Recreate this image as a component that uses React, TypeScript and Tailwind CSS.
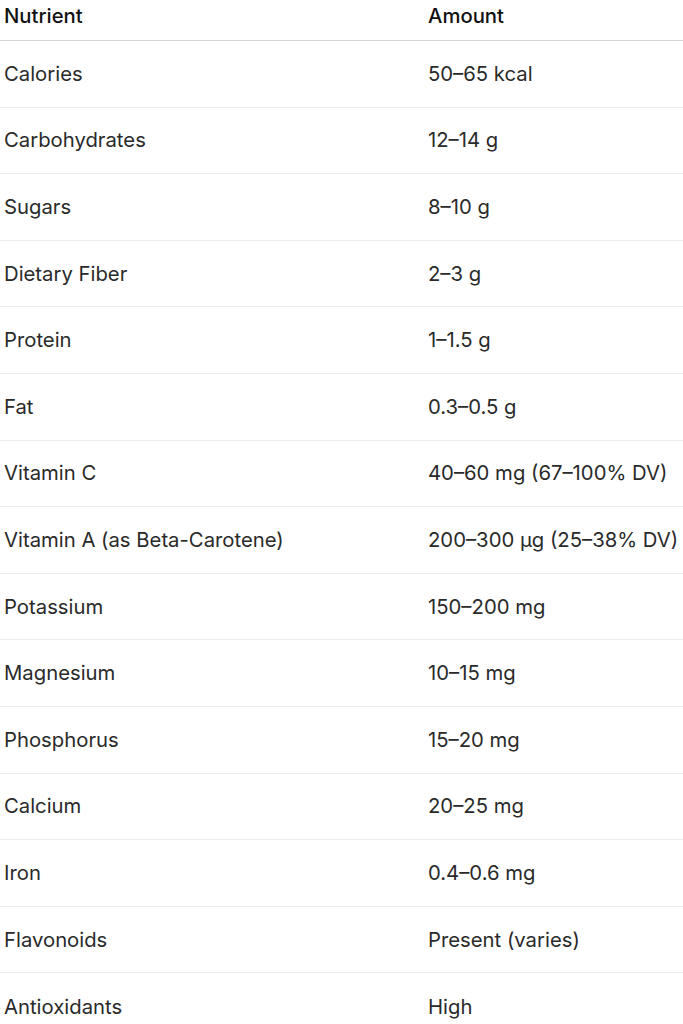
import React from 'react';

interface Row {
  nutrient: string;
  amount: string;
}

const rows: Row[] = [
  { nutrient: 'Calories', amount: '50–65 kcal' },
  { nutrient: 'Carbohydrates', amount: '12–14 g' },
  { nutrient: 'Sugars', amount: '8–10 g' },
  { nutrient: 'Dietary Fiber', amount: '2–3 g' },
  { nutrient: 'Protein', amount: '1–1.5 g' },
  { nutrient: 'Fat', amount: '0.3–0.5 g' },
  { nutrient: 'Vitamin C', amount: '40–60 mg (67–100% DV)' },
  { nutrient: 'Vitamin A (as Beta-Carotene)', amount: '200–300 µg (25–38% DV)' },
  { nutrient: 'Potassium', amount: '150–200 mg' },
  { nutrient: 'Magnesium', amount: '10–15 mg' },
  { nutrient: 'Phosphorus', amount: '15–20 mg' },
  { nutrient: 'Calcium', amount: '20–25 mg' },
  { nutrient: 'Iron', amount: '0.4–0.6 mg' },
  { nutrient: 'Flavonoids', amount: 'Present (varies)' },
  { nutrient: 'Antioxidants', amount: 'High' }
];

const App: React.FC = () => {
  return (
    <div className="w-[683px] h-[1024px] overflow-hidden bg-white text-[#2a2a2a] font-['Inter',sans-serif]">
      <div className="flex h-[41px] border-b border-[#d4d4d4] text-[20.3px] font-medium leading-6 text-[#111]">
        <div className="w-[428px] pl-[4px] pt-[4px]">Nutrient</div>
        <div className="flex-1 pt-[4px]">Amount</div>
      </div>
      {rows.map((row, i) => (
        <div
          key={i}
          className={`flex items-center h-[66.6px] text-[20.3px] leading-6 ${i < rows.length - 1 ? 'border-b border-[#ececec]' : ''}`}
        >
          <div className="w-[428px] pl-[4px]">{row.nutrient}</div>
          <div className="flex-1">{row.amount}</div>
        </div>
      ))}
    </div>
  );
};

export default App;
